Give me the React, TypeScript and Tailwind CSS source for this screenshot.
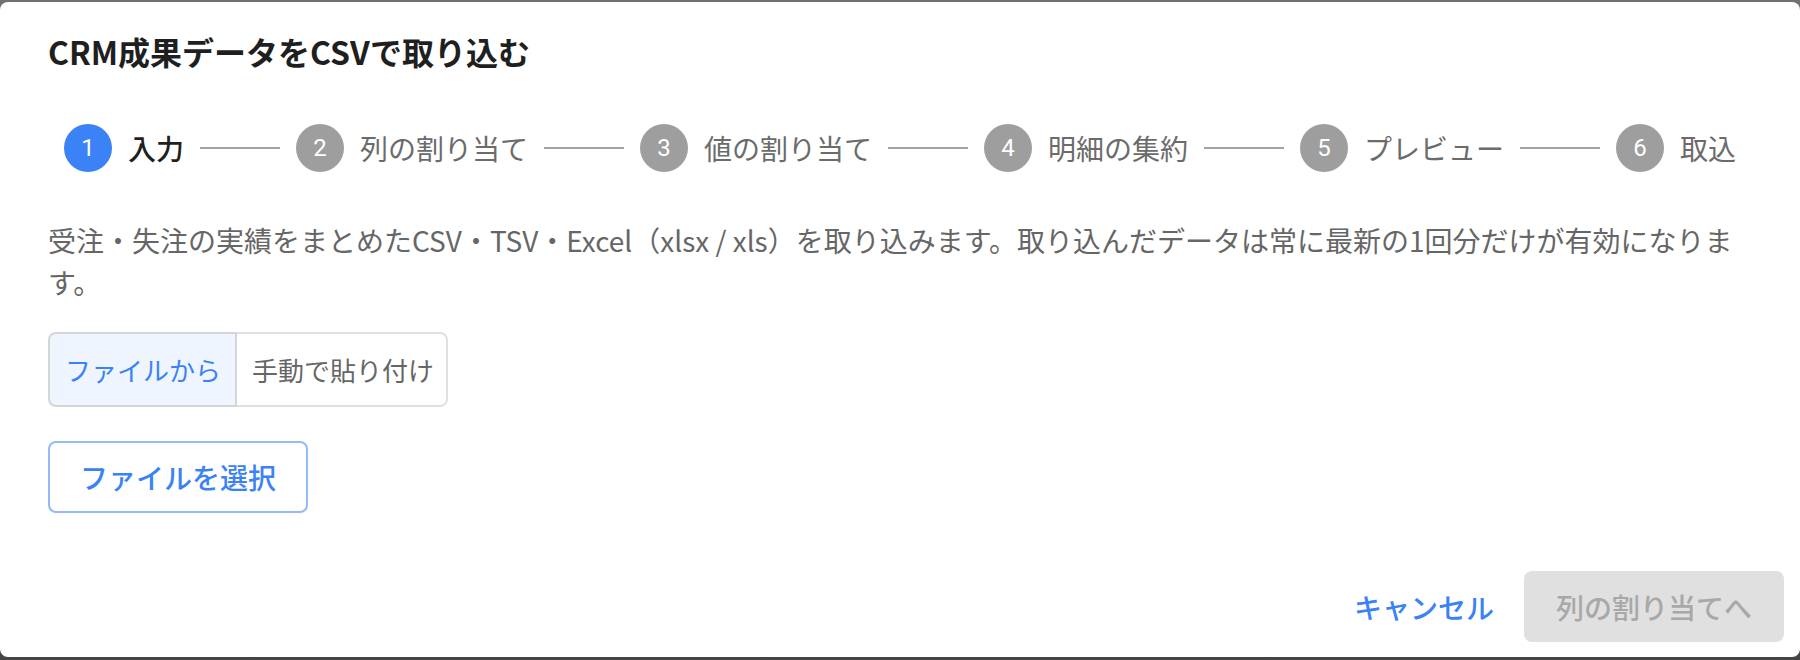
import React from "react";

const steps = ["入力", "列の割り当て", "値の割り当て", "明細の集約", "プレビュー", "取込"];

export default function App() {
  return (
    <div className="h-[660px] w-[1800px] overflow-hidden bg-linear-to-b from-[#717171] to-[#444444] pt-[2px] font-['Noto_Sans_CJK_JP','Noto_Sans',sans-serif]">
      <div className="flex h-[655px] w-[1800px] flex-col rounded-[8px] bg-white">
        <h2 className="px-12 pt-[25px] text-[32px] font-bold leading-[48px] text-[#1f1f1f]">
          CRM成果データをCSVで取り込む
        </h2>

        <div className="flex-1 px-12">
          <div className="mt-[49px] flex h-12 items-center px-4">
            {steps.map((label, i) => (
              <React.Fragment key={label}>
                {i > 0 && <div className="mx-4 h-[2px] flex-1 bg-[#a3a3a3]" />}
                <div className="flex items-center">
                  <div
                    className={
                      i === 0
                        ? "flex h-12 w-12 items-center justify-center rounded-full bg-[#3b82f6] font-['Roboto',sans-serif] text-[24px] text-white"
                        : "flex h-12 w-12 items-center justify-center rounded-full bg-[#9e9e9e] font-['Roboto',sans-serif] text-[24px] text-white"
                    }
                  >
                    {i + 1}
                  </div>
                  <span
                    className={
                      i === 0
                        ? "ml-4 whitespace-nowrap text-[28px] font-medium leading-[40px] text-[#1f1f1f]"
                        : "ml-4 whitespace-nowrap text-[28px] leading-[40px] text-[#6b6b6b]"
                    }
                  >
                    {label}
                  </span>
                </div>
              </React.Fragment>
            ))}
          </div>

          <p className="mt-[47px] text-[28px] leading-[42px] text-[#666666]">
            受注・失注の実績をまとめたCSV・TSV・Excel（xlsx / xls）を取り込みます。取り込んだデータは常に最新の1回分だけが有効になります。
          </p>

          <div className="mt-[29px] flex">
            <button className="flex h-[75px] items-center rounded-l-[8px] border-2 border-[#d4d5d8] bg-[#eff5ff] pl-[15px] pr-[14px] text-[26px] text-[#3b82f6]">
              ファイルから
            </button>
            <button className="flex h-[75px] items-center rounded-r-[8px] border-y-2 border-r-2 border-[#e0e0e0] bg-white pl-[15px] pr-[12px] text-[26px] text-[#666666]">
              手動で貼り付け
            </button>
          </div>

          <button className="mt-[34px] flex h-[72px] items-center rounded-[8px] border-2 border-[#94baf8] bg-white px-[30px] text-[28px] font-medium text-[#3b82f6]">
            ファイルを選択
          </button>
        </div>

        <div className="flex items-center justify-end gap-[14px] px-4 pb-[15px]">
          <button className="flex h-[71px] items-center px-4 text-[28px] font-medium text-[#3b82f6]">
            キャンセル
          </button>
          <button className="flex h-[71px] items-center rounded-[8px] bg-[#e0e0e0] px-8 text-[28px] font-medium text-[#a8a8a8]">
            列の割り当てへ
          </button>
        </div>
      </div>
    </div>
  );
}
